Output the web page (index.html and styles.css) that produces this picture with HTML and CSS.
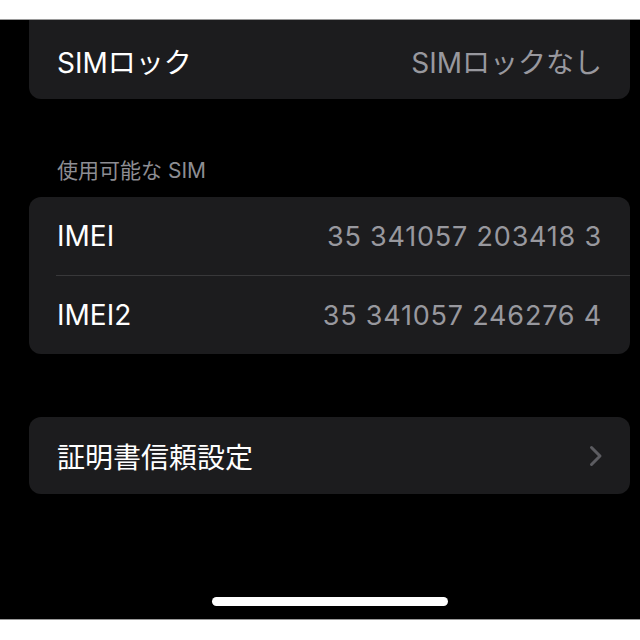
FILE: index.html
```html
<!DOCTYPE html>
<html lang="ja">
  <head>
    <meta charset="UTF-8" />
    <meta name="viewport" content="width=device-width, initial-scale=1.0" />
    <title>情報</title>
    <link rel="stylesheet" href="styles.css">
  </head>
  <body>
    <div class="pantalla">
      <div class="grupo grupo-cortado">
        <div class="fila">
          <span class="etiqueta">SIMロック</span>
          <span class="valor">SIMロックなし</span>
        </div>
      </div>

      <h3 class="cabecera">使用可能な SIM</h3>
      <div class="grupo">
        <div class="fila">
          <span class="etiqueta">IMEI</span>
          <span class="valor numero">35 341057 203418 3</span>
        </div>
        <div class="separador"></div>
        <div class="fila">
          <span class="etiqueta">IMEI2</span>
          <span class="valor numero">35 341057 246276 4</span>
        </div>
      </div>

      <div class="grupo grupo-suelto">
        <div class="fila">
          <span class="etiqueta">証明書信頼設定</span>
          <svg class="flecha" width="14" height="22" viewBox="0 0 14 22">
            <polyline points="2.5,2.5 11,11 2.5,19.5" fill="none" stroke="#5c5c61" stroke-width="3" stroke-linecap="round" stroke-linejoin="round" />
          </svg>
        </div>
      </div>

      <div class="indicador"></div>
    </div>
  </body>
</html>
```

FILE: styles.css
```css
body {
  margin: 0;
  background: white;
  font-family: Inter, "Noto Sans CJK JP", sans-serif;
}
.pantalla {
  margin-top: 19px;
  height: 601px;
  box-sizing: border-box;
  background: black;
  padding: 0 10px 13px 29px;
  display: flex;
  flex-direction: column;
  border-top: 1px solid #9a9a9a;
  border-bottom: 1px solid #9a9a9a;
}
.grupo {
  background: #1c1c1e;
  border-radius: 12px;
  display: flex;
  flex-direction: column;
}
.grupo-cortado {
  border-radius: 0 0 12px 12px;
}
.grupo-cortado .fila {
  height: 79px;
  padding-top: 2px;
  box-sizing: border-box;
}
.fila {
  height: 78px;
  padding: 0 28px;
  display: flex;
  align-items: center;
  justify-content: space-between;
}
.etiqueta {
  color: white;
  font-size: 28px;
}
.valor {
  color: #98989e;
  font-size: 28px;
}
.numero {
  font-size: 27px;
  letter-spacing: 0.8px;
}
.separador {
  height: 1px;
  background: #38383a;
  margin-left: 27px;
}
.cabecera {
  margin: 58px 0 12px 28px;
  line-height: 28px;
  font-size: 21px;
  font-weight: normal;
  color: #8d8d93;
}
.grupo-suelto {
  margin-top: 63px;
}
.grupo-suelto .fila {
  height: 77px;
}
.flecha {
  margin-right: -1px;
}
.indicador {
  margin-top: auto;
  align-self: center;
  width: 236px;
  height: 9px;
  border-radius: 5px;
  background: white;
}
```
